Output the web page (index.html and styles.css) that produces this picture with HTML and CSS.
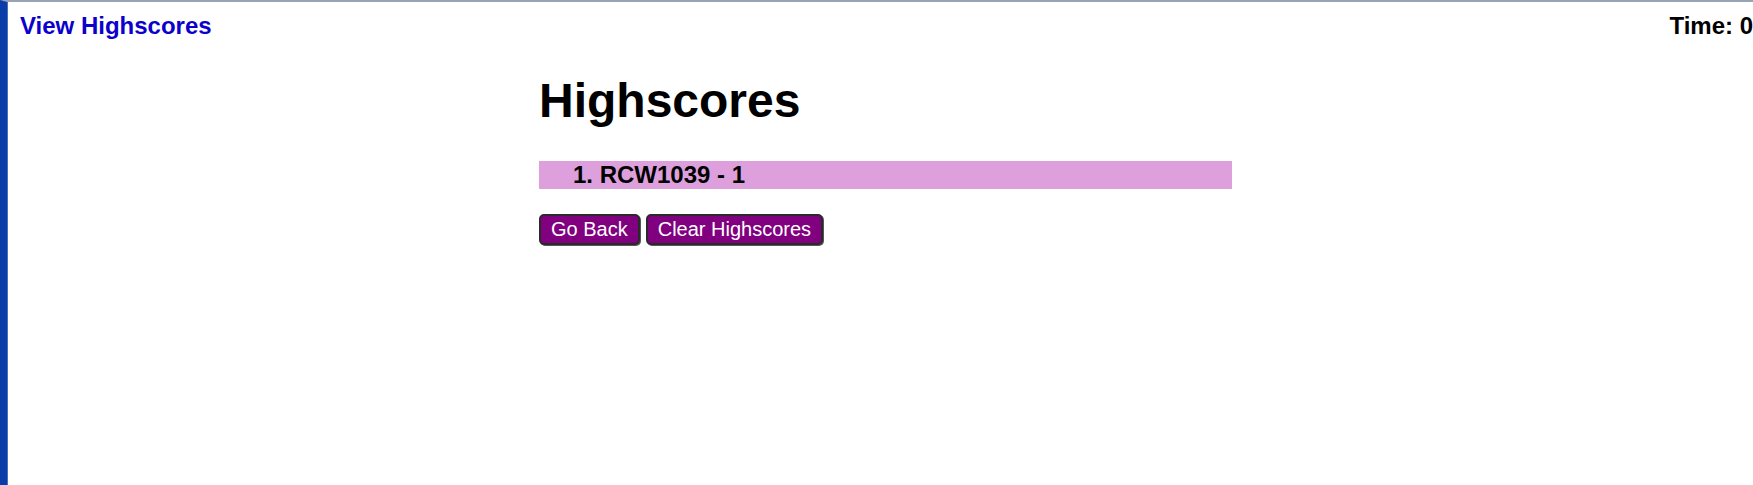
FILE: index.html
```html
<!DOCTYPE html>
<html lang="en">
<head>
<meta charset="utf-8">
<title>Highscores</title>
<link rel="stylesheet" href="styles.css">
</head>
<body>
<div class="frame">
  <header class="topbar">
    <a class="view-link" href="#">View Highscores</a>
    <div class="timer">Time: 0</div>
  </header>
  <main class="main">
    <h1 class="title">Highscores</h1>
    <ol class="scores">
      <li class="score">1. RCW1039 - 1</li>
    </ol>
    <div class="actions">
      <button class="btn" type="button">Go Back</button>
      <button class="btn" type="button">Clear Highscores</button>
    </div>
  </main>
</div>
</body>
</html>
```
FILE: styles.css
```css
html, body {
  margin: 0;
  padding: 0;
  background: #ffffff;
}

body {
  font-family: "Liberation Sans", Arial, sans-serif;
  color: #000;
  overflow: hidden;
}

.frame {
  box-sizing: border-box;
  min-height: 100vh;
  border-left: 7px solid #0a3da8;
  border-top: 2px solid #98a4b6;
  box-shadow: inset 1px 0 0 #4a6fc0;
}

.topbar {
  display: flex;
  justify-content: space-between;
  align-items: flex-start;
  padding: 10px 0 0 13px;
  font-size: 24px;
  font-weight: bold;
}

.view-link {
  color: #0c00cc;
  text-decoration: none;
}

.timer {
  color: #000;
}

.main {
  width: 693px;
  margin-left: 532px;
}

.title {
  margin: 33px 0 0 0;
  font-size: 48px;
  font-weight: bold;
  line-height: normal;
}

.scores {
  list-style: none;
  margin: 33px 0 0 0;
  padding: 0;
}

.score {
  background: #dda0dd;
  height: 28px;
  line-height: 28px;
  padding-left: 34px;
  font-size: 24px;
  font-weight: bold;
}

.actions {
  display: flex;
  gap: 6px;
  margin-top: 25px;
}

.btn {
  font-family: "Liberation Sans", Arial, sans-serif;
  font-size: 20px;
  line-height: 23px;
  color: #ffffff;
  background: #800080;
  border: 2px solid #2a2a2a;
  border-radius: 5px;
  padding: 2px 10px;
  margin: 0;
  box-shadow: 1px 1px 0 #555;
  cursor: pointer;
}
```
